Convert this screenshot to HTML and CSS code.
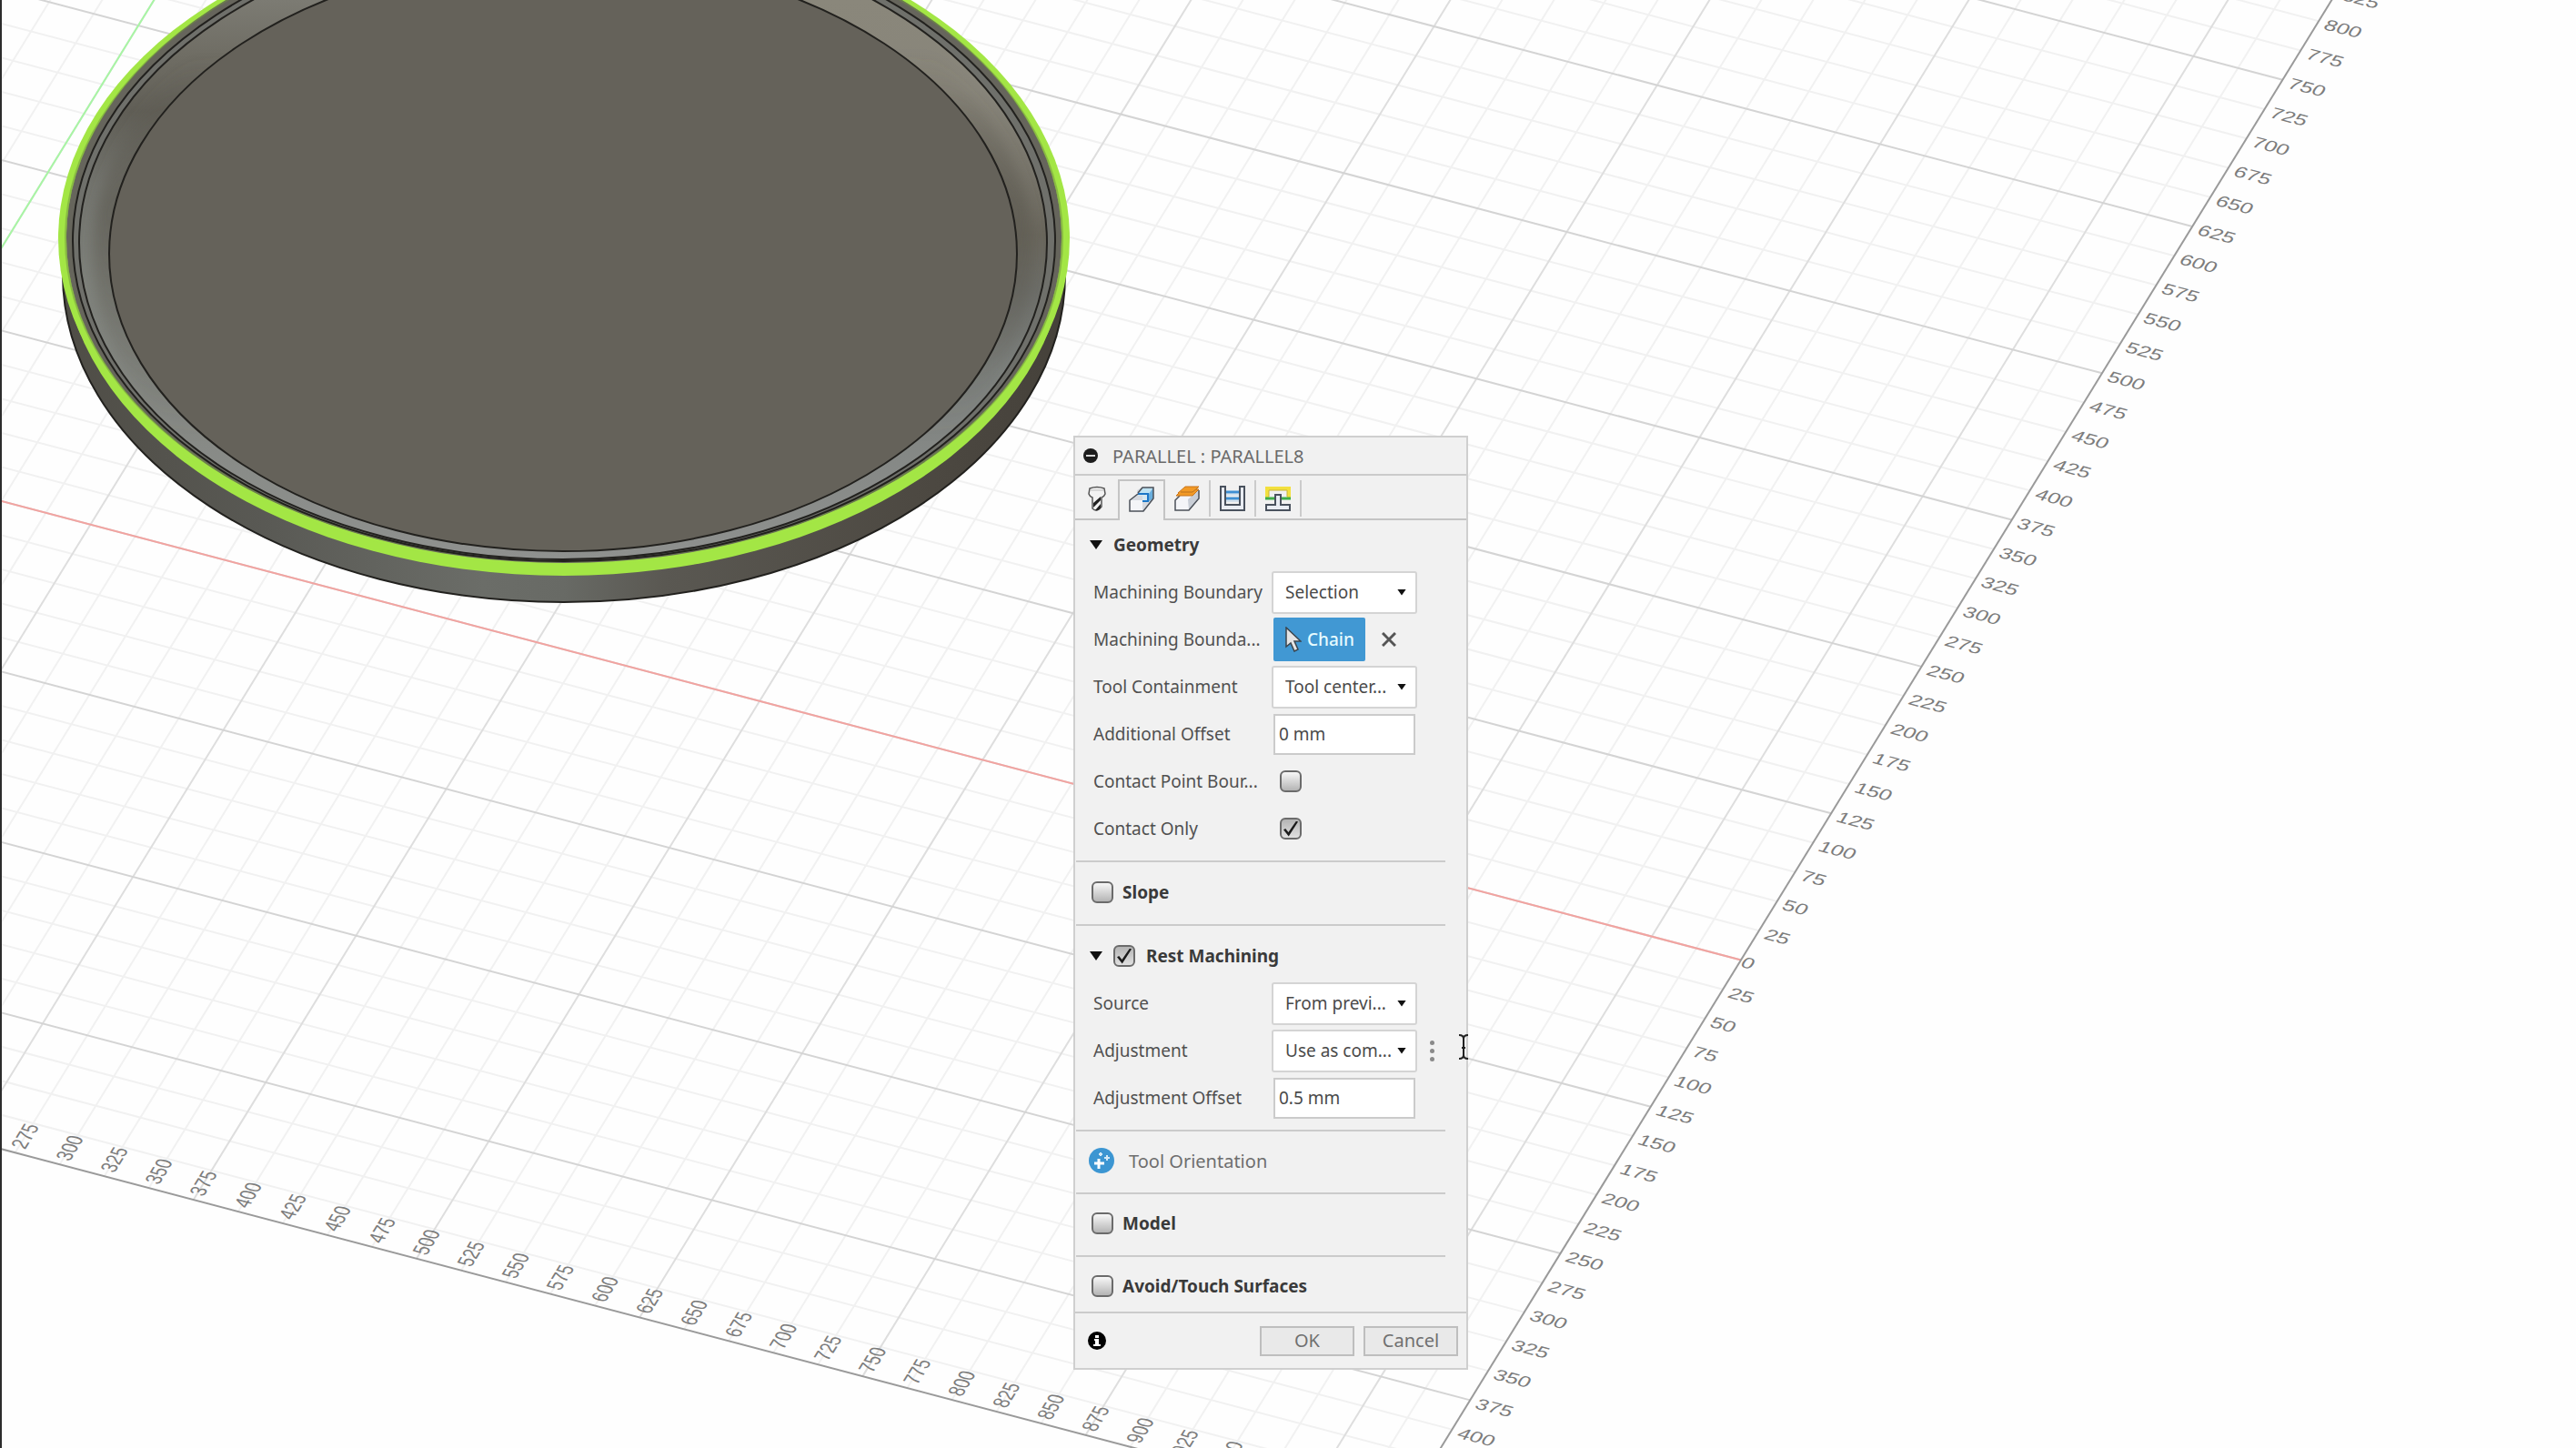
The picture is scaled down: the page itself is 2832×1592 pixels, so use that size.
FILE: index.html
```html
<!DOCTYPE html>
<html lang="en">
<head>
<meta charset="utf-8">
<title>Parallel : Parallel8</title>
<link rel="stylesheet" href="styles.css">
</head>
<body>
<main class="viewport">
  <svg class="scene" viewBox="0 0 2832 1592" preserveAspectRatio="xMinYMin slice" role="img" aria-label="Dish model on the work plane">
    <defs>
      <linearGradient id="side" x1="69" x2="1171" y1="0" y2="0" gradientUnits="userSpaceOnUse">
        <stop offset="0" stop-color="#4f4d46"/><stop offset=".2" stop-color="#595954"/>
        <stop offset=".42" stop-color="#6b6d68"/><stop offset=".5" stop-color="#686a65"/>
        <stop offset=".6" stop-color="#5a5852"/><stop offset=".85" stop-color="#4d4942"/>
        <stop offset="1" stop-color="#45413a"/>
      </linearGradient>
      <linearGradient id="wall-left" x1="0" x2="0" y1="0" y2="615" gradientUnits="userSpaceOnUse">
        <stop offset="0" stop-color="#7c7b73"/><stop offset=".1" stop-color="#6f6d64"/>
        <stop offset=".2" stop-color="#605e56"/><stop offset=".33" stop-color="#72736d"/>
        <stop offset=".5" stop-color="#7e817b"/><stop offset=".7" stop-color="#848782"/>
        <stop offset="1" stop-color="#8f918f"/>
      </linearGradient>
      <linearGradient id="wall-right" x1="0" x2="0" y1="0" y2="615" gradientUnits="userSpaceOnUse">
        <stop offset="0" stop-color="#8a877b"/><stop offset=".16" stop-color="#88857a"/>
        <stop offset=".3" stop-color="#78756b"/><stop offset=".42" stop-color="#69665c"/>
        <stop offset=".52" stop-color="#6c6d68"/><stop offset=".66" stop-color="#7d817e"/>
        <stop offset="1" stop-color="#8f918f"/>
      </linearGradient>
      <linearGradient id="shade" x1="0" x2="0" y1="60" y2="480" gradientUnits="userSpaceOnUse">
        <stop offset="0" stop-color="#5c5950" stop-opacity="0"/><stop offset=".4" stop-color="#5c5950" stop-opacity=".6"/>
        <stop offset="1" stop-color="#5c5950" stop-opacity="0"/>
      </linearGradient>
      <filter id="soft" x="-5%" y="-5%" width="110%" height="110%"><feGaussianBlur stdDeviation="7"/></filter>
      <clipPath id="inside"><ellipse cx="619" cy="267" rx="532" ry="348"/></clipPath>
    </defs>

    <!-- Work plane, in millimetres: x to the right edge, y towards the viewer -->
    <g class="plane" id="plane" transform="matrix(1.9616 .5176 -.794 1.2904 -145.7 512)"></g>

    <path fill="url(#side)" class="edge" d="M69 272A551 360 0 0 0 69 302A551 360 0 0 0 1171 302L1171 272Z"/>
    <ellipse class="chain" cx="620" cy="273" rx="551" ry="360"/>
    <ellipse class="chain" cx="620" cy="262" rx="556" ry="360"/>
    <ellipse class="rim" cx="620" cy="262" rx="547" ry="357"/>
    <ellipse class="rim-edge" cx="620" cy="262" rx="548" ry="355"/>
    <ellipse class="lip" cx="620" cy="265" rx="540" ry="352"/>
    <g clip-path="url(#inside)">
      <rect x="60" y="-100" width="560" height="720" fill="url(#wall-left)"/>
      <rect x="619" y="-100" width="560" height="720" fill="url(#wall-right)"/>
      <ellipse cx="619" cy="279" rx="499" ry="327" fill="none" stroke="url(#shade)" stroke-width="36" filter="url(#soft)"/>
    </g>
    <ellipse class="line" cx="619" cy="267" rx="532" ry="348"/>
    <ellipse class="floor" cx="619" cy="279" rx="499" ry="327"/>
    <path class="frame" d="M1 0V1592"/>
  </svg>

  <form class="panel" onsubmit="return false">
    <header class="panel-title">
      <svg class="collapse" viewBox="0 0 16 16" aria-hidden="true"><circle cx="8" cy="8" r="8" fill="#1c1c1c"/><rect x="3" y="7" width="10" height="2" fill="#d8d8d8"/></svg>
      <span>PARALLEL : PARALLEL8</span>
    </header>

    <nav class="tabs">
      <button type="button" class="tab tool" aria-label="Tool">
        <svg viewBox="0 0 28 28"><path d="M6 3Q14 0 22 3L23 9Q22 12 19 13L19 23Q14 30 9 25L9 13Q6 12 5 9Z" fill="#f2f2f2" stroke="#555" stroke-width="1.5"/><path d="M6 5H22" stroke="#bbb"/><path d="M10 19L18 12V16L10 24ZM12 27L18 20V24Q16 28 12 27Z" fill="#222"/></svg>
      </button>
      <button type="button" class="tab active" aria-label="Geometry">
        <svg viewBox="0 0 28 28"><path d="M1 15L9 8V4L14 1H26V14L16 27H1Z" fill="#d5d9df"/><path d="M1 15H15V27H1Z" fill="#f4f5f8"/><path d="M10 8L15 1H27L22 8Z" fill="#bfe3f3"/><path d="M22 8L27 1V13L21 17Z" fill="#69aede"/><path d="M10 8H21V16H15V10H10Z" fill="#d6e9f2"/><path d="M10 8H21V16H15" fill="none" stroke="#1c77c8" stroke-width="2"/><path d="M10 8L1 15V27H16L27 13V1H15L10 7" fill="none" stroke="#4b5058" stroke-width="1.5"/></svg>
      </button>
      <button type="button" class="tab" aria-label="Heights">
        <svg viewBox="0 0 28 28"><path d="M1 15L10 9H27V13L16 27H1Z" fill="#f4f5f8"/><path d="M15 15L27 5V13L16 27Z" fill="#c9ced6"/><path d="M6 11L1 16V27H16L27 14V5" fill="none" stroke="#4b5058" stroke-width="1.5"/><path d="M4 8L12 1H27L24 4H27L20 11H2L5 8Z" fill="#f29a26" stroke="#c8741a"/><path d="M7 7H20L25 3" fill="none" stroke="#b9711f"/></svg>
      </button>
      <button type="button" class="tab" aria-label="Passes">
        <svg viewBox="0 0 28 28"><path d="M1 1H6V21H22V1H27V27H1Z" fill="#e9edf3" stroke="#4a525e" stroke-width="2"/><path d="M7 7H21M7 14H21" stroke="#3e8fd4" stroke-width="3"/><path d="M7 10H21M7 17H21" stroke="#b8d2ea"/></svg>
      </button>
      <button type="button" class="tab" aria-label="Linking">
        <svg viewBox="0 0 28 28"><path d="M2 13V3H26V13" fill="none" stroke="#f3e03e" stroke-width="4"/><path d="M4 12V5H24V12" fill="none" stroke="#c8b436"/><path d="M0 14H10M18 14H28" stroke="#3fae49" stroke-width="3"/><path d="M11 10H17V21H27V27H1V21H11Z" fill="#e9edf3" stroke="#4a525e" stroke-width="2"/></svg>
      </button>
    </nav>

    <section class="group">
      <h2 class="row head"><span class="twisty"></span>Geometry</h2>
      <div class="row"><label class="name" for="boundary">Machining Boundary</label>
        <span class="select"><select id="boundary"><option>Selection</option></select></span></div>
      <div class="row"><span class="name">Machining Bounda...</span>
        <button type="button" class="pick"><svg viewBox="0 0 18 28" aria-hidden="true"><path d="M1 1V22L6 18L10 27L14 25L10 16H17Z" fill="#e4e4e4" stroke="#3b444c" stroke-width="1.5"/></svg>Chain</button>
        <button type="button" class="clear" aria-label="Clear selection"><svg viewBox="0 0 16 16"><path d="M1 1L15 15M15 1L1 15" stroke="#555" stroke-width="3"/></svg></button></div>
      <div class="row"><label class="name" for="containment">Tool Containment</label>
        <span class="select"><select id="containment"><option>Tool center...</option></select></span></div>
      <div class="row"><label class="name" for="offset">Additional Offset</label>
        <input class="field" id="offset" type="text" value="0 mm"></div>
      <div class="row"><label class="name" for="point">Contact Point Bour...</label>
        <input class="check inset" id="point" type="checkbox"></div>
      <div class="row"><label class="name" for="only">Contact Only</label>
        <input class="check inset" id="only" type="checkbox" checked></div>
    </section>

    <section class="group">
      <h2 class="row head"><input class="check" id="slope" type="checkbox"><label for="slope">Slope</label></h2>
    </section>

    <section class="group">
      <h2 class="row head"><span class="twisty"></span><input class="check" id="rest" type="checkbox" checked><label for="rest">Rest Machining</label></h2>
      <div class="row"><label class="name" for="source">Source</label>
        <span class="select"><select id="source"><option>From previ...</option></select></span></div>
      <div class="row"><label class="name" for="adjust">Adjustment</label>
        <span class="select"><select id="adjust"><option>Use as com...</option></select></span>
        <button type="button" class="more" aria-label="More"><i></i><i></i><i></i></button></div>
      <div class="row"><label class="name" for="adjoffset">Adjustment Offset</label>
        <input class="field" id="adjoffset" type="text" value="0.5 mm"></div>
    </section>

    <section class="group compact">
      <div class="row orient">
        <svg viewBox="0 0 28 28" aria-hidden="true"><circle cx="14" cy="14" r="14" fill="#3c96d2"/><path d="M11 12V23M6 17H17" stroke="#fff" stroke-width="3"/><path d="M20 8V14M17 11H23" stroke="#d4eaf7" stroke-width="2"/><path d="M13 5V9M11 7H15" stroke="#d4eaf7" stroke-width="2"/></svg>
        <span>Tool Orientation</span></div>
    </section>

    <section class="group compact">
      <h2 class="row head"><input class="check" id="model" type="checkbox"><label for="model">Model</label></h2>
    </section>

    <section class="group last">
      <h2 class="row head"><input class="check" id="avoid" type="checkbox"><label for="avoid">Avoid/Touch Surfaces</label></h2>
    </section>

    <footer class="actions">
      <svg class="info" viewBox="0 0 20 20" aria-hidden="true"><circle cx="10" cy="10" r="10" fill="#000"/><path d="M8 4H12V7H8ZM7 8H12V14H14V16H6V14H8V10H7Z" fill="#fff"/></svg>
      <button type="button" class="btn">OK</button>
      <button type="button" class="btn">Cancel</button>
    </footer>

    <svg class="ibeam" viewBox="0 0 12 28" aria-hidden="true"><path d="M1 1Q6 1 6 5Q6 1 11 1M6 4V24M1 27Q6 27 6 23Q6 27 11 27M4 15H8" fill="none" stroke="#222" stroke-width="2"/></svg>
  </form>
</main>
<script src="grid.js"></script>
</body>
</html>
```
FILE: grid.js
```js
// Draws the ruled work plane: lines every 25 mm, heavier ones every 125 mm.
(function () {
  var NS = 'http://www.w3.org/2000/svg';
  var plane = document.getElementById('plane');
  var LEFT = -250, RIGHT = 1050, TOP = -1000, BOTTOM = 475, STEP = 25, MAJOR = 125;

  function line(cls, x1, y1, x2, y2) {
    var el = document.createElementNS(NS, 'path');
    el.setAttribute('class', cls);
    el.setAttribute('d', 'M' + x1 + ' ' + y1 + 'L' + x2 + ' ' + y2);
    plane.appendChild(el);
  }
  function label(value, x, y, turn) {
    var el = document.createElementNS(NS, 'text');
    el.setAttribute('class', 'tick');
    el.setAttribute('transform', 'translate(' + x + ' ' + y + ')' + (turn ? ' rotate(-90)' : ''));
    el.textContent = value;
    plane.appendChild(el);
  }

  var pass, x, y;
  for (pass = 0; pass < 2; pass++) {
    for (x = LEFT; x < RIGHT; x += STEP) {
      if ((x % MAJOR === 0) === (pass === 1)) line(pass ? 'major-y' : 'minor', x, TOP, x, BOTTOM);
    }
    for (y = TOP; y < BOTTOM; y += STEP) {
      if ((y % MAJOR === 0) === (pass === 1)) line(pass ? 'major-x' : 'minor', LEFT, y, RIGHT, y);
    }
  }
  line('axis-y', 0, TOP, 0, BOTTOM);
  line('axis-x', LEFT, 0, RIGHT, 0);
  line('border', RIGHT, TOP, RIGHT, BOTTOM);
  line('border', LEFT, BOTTOM, RIGHT, BOTTOM);

  for (y = -825; y <= 400; y += STEP) label(Math.abs(y), RIGHT + (y ? 4 : 1), y + 5);
  for (x = 275; x <= 950; x += STEP) label(x, x + 4, BOTTOM - 4, true);
})();
```
FILE: styles.css
```css
* { box-sizing: border-box; }
body { margin: 0; background: #fefefe; font-family: "Noto Sans", "Open Sans", sans-serif; font-size: 19px; color: #4a4a4a; }
button, input, select { font: inherit; color: inherit; margin: 0; padding: 0; }
button { border: 0; background: none; }

.viewport { position: relative; height: 100vh; min-height: 1520px; overflow: hidden; }
.scene { display: block; width: 100%; height: 100%; }

.plane path { fill: none; vector-effect: non-scaling-stroke; stroke-width: 2px; }
.plane .minor { stroke: #f1f1f1; }
.plane .major-x { stroke: #d4d4d4; }
.plane .major-y { stroke: #dedede; }
.plane .axis-x { stroke: #f2a3a0; }
.plane .axis-y { stroke: #a8f5a4; }
.plane .border { stroke: #9a9a9a; }
.tick { font-family: "Liberation Sans", sans-serif; font-size: 12px; fill: #7c7c7c; }

.edge { stroke: #22211e; stroke-width: 2px; }
.chain { fill: #a3e645; }
.rim { fill: #66655c; }
.rim-edge { fill: none; stroke: #6f9140; stroke-width: 2px; opacity: .5; }
.lip { fill: #6f706b; stroke: #22211e; stroke-width: 2px; }
.line { fill: none; stroke: #22211e; stroke-width: 2px; }
.floor { fill: #65625a; stroke: #22211e; stroke-width: 2px; }
.frame { fill: none; stroke: #2c2c2c; stroke-width: 2px; }

.panel { position: absolute; left: 1180px; top: 479px; width: 434px; background: #f1f1f1; border: 2px solid #cfcfcf; }
.panel-title { display: flex; align-items: center; gap: 16px; height: 42px; padding-left: 9px; border-bottom: 2px solid #cbcbcb; font-size: 20px; color: #6a6a6a; }
.collapse { width: 16px; height: 16px; }

.tabs { display: flex; align-items: flex-end; height: 49px; box-shadow: inset 0 -2px #c4c4c4; }
.tab { display: grid; place-items: center; width: 50px; height: 40px; margin-bottom: 4px; border-right: 2px solid #cbcbcb; }
.tab svg { width: 28px; height: 28px; }
.tab.tool { width: 47px; border-right: 0; }
.tab.active { width: 52px; height: 45px; margin-bottom: 0; padding-bottom: 4px; background: #f1f1f1; border: 2px solid #c4c4c4; border-bottom: 0; }

.group { margin: 0 23px 0 1px; padding: 7px 0 9px 19px; border-bottom: 2px solid #cbcbcb; }
.tabs + .group { padding-top: 1px; }
.group.compact { padding-top: 6px; }
.group.last { padding: 6px 0 2px 19px; border-bottom: 0; }
.row { display: flex; align-items: center; height: 52px; margin: 0; white-space: nowrap; }
.head { margin-left: -4px; gap: 12px; font-size: 19px; font-weight: 700; color: #3a3a3a; }
.twisty { width: 14px; height: 10px; background: #111; clip-path: polygon(0 0, 100% 0, 50% 100%); }
.name { flex: 0 0 196px; color: #505050; }

.select { position: relative; width: 160px; height: 47px; }
.select select { appearance: none; width: 100%; height: 100%; padding-left: 13px; background: #fff; border: 2px solid #d4d4d4; border-radius: 3px; }
.select::after { content: ""; position: absolute; right: 12px; top: 20px; width: 10px; height: 7px; background: #111; clip-path: polygon(0 0, 100% 0, 50% 100%); pointer-events: none; }
.field { width: 156px; height: 45px; margin-left: 2px; padding-left: 4px; background: #fff; border: 2px solid #cbcbcb; }

.pick { display: flex; align-items: center; gap: 6px; width: 101px; height: 48px; margin-left: 2px; padding-left: 13px; background: #4198d3; border-radius: 2px; color: #e6fbff; font-weight: 500; }
.pick svg { width: 18px; height: 28px; }
.clear { display: grid; margin-left: 18px; }
.clear svg { width: 16px; height: 16px; }
.more { display: grid; gap: 4px; margin-left: 14px; }
.more i { width: 5px; height: 5px; border-radius: 50%; background: #8a8a8a; }

.check { appearance: none; width: 24px; height: 24px; border: 2px solid #6b6b6b; border-radius: 6px; background: linear-gradient(#f8f8f8, #b4b4b4); }
.check.inset { margin-left: 9px; }
.head .check:first-child { margin-left: 2px; margin-right: -2px; }
.check:checked { background: linear-gradient(#b4b4b4, #e0e0e0); display: grid; place-items: center; }
.check:checked::before { content: ""; width: 16px; height: 17px; background: #1c1c1c; clip-path: polygon(0 58%, 14% 50%, 34% 74%, 88% 0, 100% 6%, 36% 100%); }

.orient { gap: 16px; margin-left: -5px; font-size: 20px; color: #6e6e6e; }
.orient svg { width: 28px; height: 28px; }

.actions { display: flex; align-items: center; gap: 10px; height: 62px; padding: 0 9px 0 14px; border-top: 2px solid #cbcbcb; }
.info { width: 20px; height: 20px; margin-right: auto; }
.btn { width: 104px; height: 33px; border: 2px solid #bebebe; background: #e9e9e9; font-size: 20px; line-height: 26px; color: #707070; }

.ibeam { position: absolute; left: 421px; top: 656px; width: 12px; height: 28px; }
```
